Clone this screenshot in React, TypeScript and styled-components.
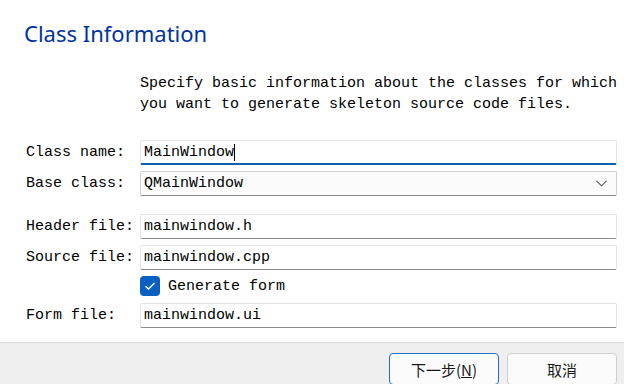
import React from 'react'
import styled, { createGlobalStyle } from 'styled-components'

const GlobalStyle = createGlobalStyle`
  html, body {
    margin: 0;
    padding: 0;
    background: #ffffff;
  }
  * {
    box-sizing: border-box;
  }
`

const mono = `"Liberation Mono", "DejaVu Sans Mono", monospace`

const Dialog = styled.div`
  width: 624px;
  height: 384px;
  display: flex;
  flex-direction: column;
  background: #ffffff;
  overflow: hidden;
`

const Page = styled.div`
  flex: 1;
  display: flex;
  flex-direction: column;
  padding: 19px 7px 0 26px;
`

const Title = styled.h1`
  margin: 0 0 0 -2px;
  font-family: "Noto Sans", "Open Sans", sans-serif;
  font-weight: 400;
  font-size: 22px;
  line-height: 28px;
  color: #0033a0;
`

const Description = styled.p`
  margin: 26px 0 25px 114px;
  font-family: ${mono};
  font-size: 15px;
  line-height: 21px;
  color: #000;
  white-space: pre;
`

const Row = styled.div<{ $gap?: number }>`
  display: grid;
  grid-template-columns: 114px 1fr;
  align-items: center;
  margin-top: ${p => p.$gap ?? 0}px;
`

const Label = styled.label`
  font-family: ${mono};
  font-size: 15px;
  color: #000;
  white-space: pre;
`

const Field = styled.div<{ $focused?: boolean; $combo?: boolean }>`
  height: 25px;
  display: flex;
  align-items: center;
  padding: 0 3px;
  font-family: ${mono};
  font-size: 15px;
  color: #000;
  background: ${p => (p.$combo ? '#fbfbfb' : '#ffffff')};
  border: 1px solid ${p => (p.$combo ? '#d0d0d0' : '#e5e5e5')};
  border-bottom: ${p => (p.$focused ? '2px solid #0f5fb5' : '1px solid #8a8a8a')};
  border-radius: 2px;
`

const Caret = styled.span`
  display: inline-block;
  width: 1px;
  height: 17px;
  background: #000;
`

const Chevron = styled.svg`
  margin-left: auto;
  margin-right: 6px;
`

const CheckRow = styled.label`
  grid-column: 2;
  display: flex;
  align-items: center;
  gap: 8px;
  height: 20px;
  font-family: ${mono};
  font-size: 15px;
  color: #000;
`

const CheckBox = styled.span`
  width: 20px;
  height: 20px;
  border-radius: 4px;
  background: #0a5fc2;
  display: flex;
  align-items: center;
  justify-content: center;
`

const Footer = styled.div`
  height: 42px;
  flex: none;
  display: flex;
  justify-content: flex-end;
  gap: 8px;
  padding: 10px 7px 0 0;
  background: #efefef;
  border-top: 1px solid #dcdcdc;
`

const Button = styled.button<{ $default?: boolean }>`
  width: 110px;
  height: 32px;
  font-family: "Noto Sans CJK SC", "Noto Sans", sans-serif;
  font-size: 15px;
  color: #1a1a1a;
  background: #fbfbfb;
  border: 1px solid ${p => (p.$default ? '#1f6fc4' : '#d0d0d0')};
  border-radius: 4px;
  padding: 0;
`

export default function App() {
  return (
    <Dialog>
      <GlobalStyle />
      <Page>
        <Title>Class Information</Title>
        <Description>
          {'Specify basic information about the classes for which\nyou want to generate skeleton source code files.'}
        </Description>

        <Row>
          <Label>Class name:</Label>
          <Field $focused>
            MainWindow
            <Caret />
          </Field>
        </Row>
        <Row $gap={6}>
          <Label>Base class:</Label>
          <Field $combo>
            QMainWindow
            <Chevron width="11" height="7" viewBox="0 0 11 7">
              <polyline points="0.5,0.8 5.5,5.8 10.5,0.8" fill="none" stroke="#555" strokeWidth="1.1" />
            </Chevron>
          </Field>
        </Row>

        <Row $gap={18}>
          <Label>Header file:</Label>
          <Field>mainwindow.h</Field>
        </Row>
        <Row $gap={6}>
          <Label>Source file:</Label>
          <Field>mainwindow.cpp</Field>
        </Row>
        <Row $gap={6}>
          <CheckRow>
            <CheckBox>
              <svg width="12" height="10" viewBox="0 0 12 10">
                <polyline points="1.5,5.2 4.5,8 10.5,2" fill="none" stroke="#fff" strokeWidth="1.3" />
              </svg>
            </CheckBox>
            Generate form
          </CheckRow>
        </Row>
        <Row $gap={7}>
          <Label>Form file:</Label>
          <Field>mainwindow.ui</Field>
        </Row>
      </Page>
      <Footer>
        <Button $default>
          下一步(<u>N</u>)
        </Button>
        <Button>取消</Button>
      </Footer>
    </Dialog>
  )
}
